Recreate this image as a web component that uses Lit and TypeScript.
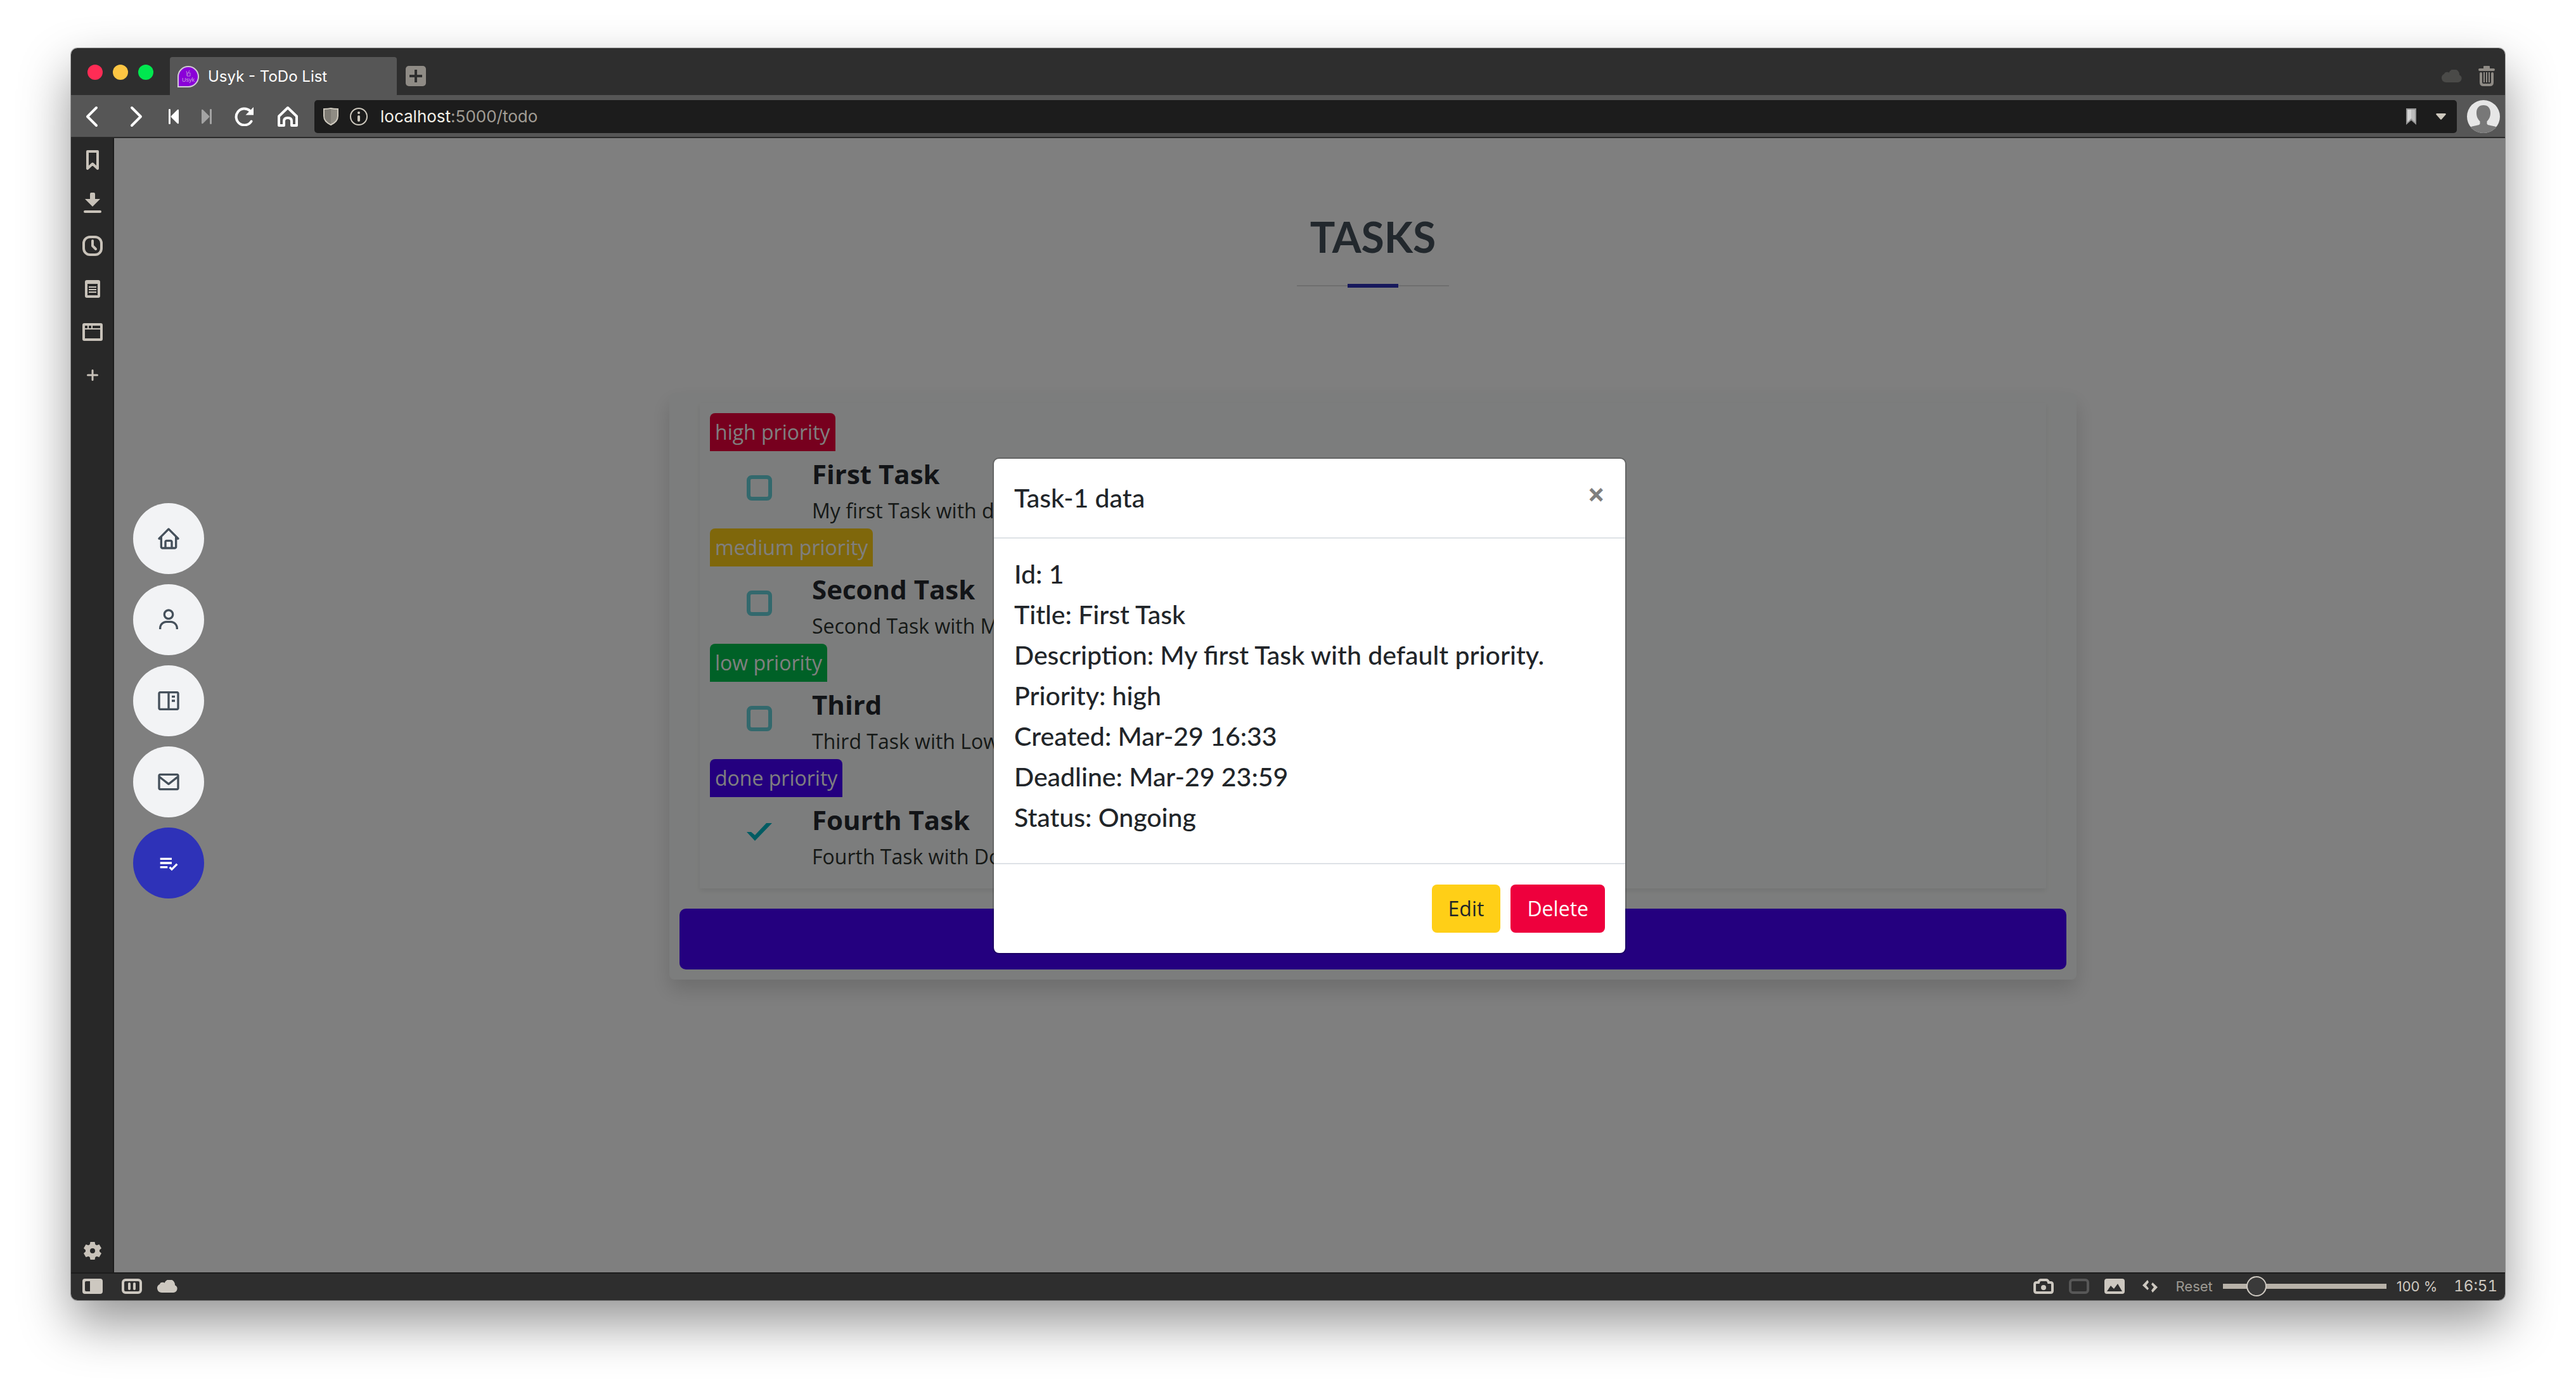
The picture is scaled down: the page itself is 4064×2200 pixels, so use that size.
import { LitElement, html, css, svg, type TemplateResult } from "lit";
import { customElement, property } from "lit/decorators.js";
import { classMap } from "lit/directives/class-map.js";

interface Task {
  id: number;
  priority: "high" | "medium" | "low" | "done";
  title: string;
  description: string;
  done: boolean;
}

const TASKS: Task[] = [
  { id: 1, priority: "high", title: "First Task", description: "My first Task with default priority.", done: false },
  { id: 2, priority: "medium", title: "Second Task", description: "Second Task with Medium priority.", done: false },
  { id: 3, priority: "low", title: "Third", description: "Third Task with Low priority.", done: false },
  { id: 4, priority: "done", title: "Fourth Task", description: "Fourth Task with Done priority.", done: true },
];

const DETAILS: [string, string][] = [
  ["Id", "1"],
  ["Title", "First Task"],
  ["Description", "My first Task with default priority."],
  ["Priority", "high"],
  ["Created", "Mar-29 16:33"],
  ["Deadline", "Mar-29 23:59"],
  ["Status", "Ongoing"],
];

const icon = (w: number, h: number, body: TemplateResult, scale = 1) => html`<svg
  width=${w * scale} height=${h * scale} viewBox="0 0 ${w} ${h}" fill="currentColor" aria-hidden="true">${body}</svg>`;

const stroke = (d: string, width: number) =>
  svg`<path d=${d} fill="none" stroke="currentColor" stroke-width=${width} stroke-linecap="round" stroke-linejoin="round"/>`;

const cloud = icon(32, 20, svg`<path d="M7 20a7 7 0 0 1-3-13.300Q5 3.500 9 3.800Q10.500 4 11.500 4.800A8.500 8.500 0 0 1 28 8.200A6.200 6.200 0 0 1 25.500 20Z"/>`);

const icons = {
  favicon: html`<svg width="34" height="34" viewBox="0 0 34 34" aria-hidden="true">
    <path d="M1 33V17A16 16 0 0 1 33 17A16 16 0 0 1 17 33Z" fill="#8a00d8" stroke="#d2cbd6" stroke-width="2"/>
    <path d="M15 15v-3l-1-4M17 11l2-4M16 11h4v5h-5z" fill="none" stroke="#b98ad6" stroke-width="1"/>
    <text x="17" y="25" font-size="9" text-anchor="middle" fill="#c7a4dc" font-family="Liberation Sans, sans-serif">Usyk</text>
  </svg>`,
  newTab: html`<svg width="32" height="32" viewBox="0 0 32 32" aria-hidden="true">
    <rect width="32" height="32" rx="5" fill="#8f8b85"/><path d="M16 6v20M6 16h20" stroke="#2e2e2e" stroke-width="4"/></svg>`,
  cloud,
  trash: icon(26, 32, svg`<path d="M8 4V1q0-1 1-1h8q1 0 1 1v3h6q2 0 2 2t-2 2H2Q0 8 0 6t2-2z"/>
    <path d="M4 12v14q0 4 4 4h10q4 0 4-4V12" fill="none" stroke="currentColor" stroke-width="4" stroke-linecap="round"/>
    <path d="M9 10v16M13 10v16M17 10v16" stroke="currentColor" stroke-width="2"/>`),
  back: icon(20, 34, stroke("M17 3L3 17L17 31", 4)),
  forward: icon(20, 34, stroke("M3 3L17 17L3 31", 4)),
  rewind: icon(16, 24, svg`<path d="M0 1q0-1 1.500-1T3 1v22q0 1-1.500 1T0 23zM16 2v20q0 2-2 1L4 13q-1-1 0-2L14 1q2-1 2 1z"/>`),
  fastForward: icon(16, 24, svg`<path d="M16 1q0-1-1.500-1T13 1v22q0 1 1.500 1t1.500-1zM0 2v20q0 2 2 1l10-10q1-1 0-2L2 1Q0 0 0 2z"/>`),
  reload: icon(30, 30, svg`<path d="M26.500 22.500A13 13 0 1 1 24 5.500" fill="none" stroke="currentColor" stroke-width="4" stroke-linecap="round"/><path d="M30 0v12.500H17.500z"/>`),
  home: icon(32, 34, stroke("M2 16.500L16 3L30 16.500V31H22V24Q22 19 16 19Q10 19 10 24V31H2Z", 4)),
  shield: html`<svg width="24" height="28" viewBox="0 0 24 28" aria-hidden="true">
    <path d="M1 2Q8 2 12 1Q16 2 23 2V13Q23 22 12 27Q1 22 1 13Z" fill="#8f8c84" stroke="#cdc8bd" stroke-width="2"/>
    <path d="M2 3Q8 3 12 2V26Q2 21 2 13Z" fill="#7d7a73"/></svg>`,
  info: icon(28, 28, svg`<circle cx="14" cy="14" r="13" fill="none" stroke="currentColor" stroke-width="2"/><circle cx="14" cy="8" r="2"/><rect x="12" y="12" width="4" height="10" rx="2"/>`),
  savedPage: html`<svg width="16" height="26" viewBox="0 0 16 26" aria-hidden="true">
    <path d="M0 0H16V26L8 19L0 26Z" fill="#949494"/><path d="M2 2H8V16L2 22Z" fill="#d4d4d4"/><path d="M8 2H14V22L8 16Z" fill="#bdbdbd"/></svg>`,
  caret: icon(16, 10, svg`<path d="M1 0H15Q16.500 1 15 2.500L9 9.300Q8 10.300 7 9.300L1 2.500Q-.5 1 1 0Z"/>`),
  avatar: html`<svg width="52" height="52" viewBox="0 0 52 52" aria-hidden="true">
    <clipPath id="face"><circle cx="26" cy="26" r="26"/></clipPath><g clip-path="url(#face)"><rect width="52" height="52" fill="#e6e6e6"/>
    <path d="M26 8c7 0 11 4.500 11 12c0 6-2 10-5.500 13.500v3.500c0 2 3 2.500 8 3.500c5 1 8 2 12.500 5.500v6H0v-6c4.500-3.500 7.500-4.500 12.500-5.500c5-1 8-1.500 8-3.500v-3.500C17 30 15 26 15 20c0-7.500 4-12 11-12z" fill="#787878"/></g></svg>`,
  bookmark: icon(20, 31, stroke("M2 2H18V29L10 21.500L2 29Z", 4)),
  download: icon(28, 32, svg`<path d="M10 2q0-2 2-2h4q2 0 2 2v8h8L14 22L2 10h8z"/><rect y="28" width="28" height="4" rx="2"/>`),
  clock: icon(32, 32, svg`<rect x="2" y="2" width="28" height="28" rx="10" fill="none" stroke="currentColor" stroke-width="4"/>${stroke("M16 8V16L21 21", 4)}`),
  notes: icon(24, 28, svg`<path fill-rule="evenodd" d="M3 0H21Q24 0 24 3V25Q24 28 21 28H3Q0 28 0 25V3Q0 0 3 0ZM4 6V24H20V6Z"/><path d="M6 10h12v2H6zM6 14h12v2H6zM6 18h12v2H6z"/>`),
  windowPanel: icon(32, 28, svg`<path fill-rule="evenodd" d="M3 0H29Q32 0 32 3V25Q32 28 29 28H3Q0 28 0 25V3Q0 0 3 0ZM4 4V8H8V4ZM10 4V8H14V4ZM16 4V8H28V4ZM4 10V24H28V10Z"/>`),
  plus: icon(18, 18, stroke("M9 1.500V16.500M1.500 9H16.500", 3)),
  gear: icon(28, 28, svg`<path fill-rule="evenodd" d="M10.500 0H17.500L18.300 4L20.500 5.300L24.500 4L28 10L25 12.800V15.200L28 18L24.500 24L20.500 22.700L18.300 24L17.500 28H10.500L9.700 24L7.500 22.700L3.500 24L0 18L3 15.200V12.800L0 10L3.500 4L7.500 5.300L9.700 4ZM14 10A4 4 0 1 0 14 18A4 4 0 1 0 14 10Z"/>`),
  panel: icon(32, 24, svg`<path fill-rule="evenodd" d="M4 0H28Q32 0 32 4V20Q32 24 28 24H4Q0 24 0 20V4Q0 0 4 0ZM6 4Q4 4 4 6V18Q4 20 6 20H12V4Z"/>`),
  pause: icon(32, 24, svg`<rect x="2" y="2" width="28" height="20" rx="4" fill="none" stroke="currentColor" stroke-width="4"/><rect x="10" y="6" width="4" height="12" rx="2"/><rect x="18" y="6" width="4" height="12" rx="2"/>`),
  camera: icon(32, 24, svg`<path d="M5 6H8Q9 2 12 2H20Q23 2 24 6H27Q30 6 30 9V19Q30 22 27 22H5Q2 22 2 19V9Q2 6 5 6Z" fill="none" stroke="currentColor" stroke-width="4"/><circle cx="16" cy="14" r="4"/>`),
  frame: icon(32, 24, svg`<rect x="2" y="2" width="28" height="20" rx="4" fill="none" stroke="currentColor" stroke-width="4"/>`),
  image: icon(32, 24, svg`<path fill-rule="evenodd" d="M4 0H28Q32 0 32 4V20Q32 24 28 24H4Q0 24 0 20V4Q0 0 4 0ZM4 20H28L21 8L15 16L10 11Z"/>`),
  code: icon(24, 20, svg`<path d="M8 0L10 3.500L6 8.500L10 13.500L8 16L0 8.500ZM16 4L14 7L18 11.500L14 16.500L16 20L24 11.500Z"/>`),
  navHome: icon(24, 24, svg`<path fill-rule="evenodd" d="M3 13h1v7c0 1.103.897 2 2 2h12c1.103 0 2-.897 2-2v-7h1a1 1 0 0 0 .707-1.707l-9-9a1 1 0 0 0-1.414 0l-9 9A1 1 0 0 0 3 13zm7 7v-5h4v5h-4zm2-15.586 6 6V20h-2v-5c0-1.103-.897-2-2-2h-4c-1.103 0-2 .897-2 2v5H6v-9.586l6-6z"/>`, 40 / 24),
  navUser: icon(24, 24, svg`<path d="M12 2C9.243 2 7 4.243 7 7s2.243 5 5 5 5-2.243 5-5-2.243-5-5-5zm0 8c-1.654 0-3-1.346-3-3s1.346-3 3-3 3 1.346 3 3-1.346 3-3 3zm9 11v-1c0-3.859-3.141-7-7-7h-4c-3.860 0-7 3.141-7 7v1h2v-1c0-2.757 2.243-5 5-5h4c2.757 0 5 2.243 5 5v1h2z"/>`, 40 / 24),
  navBook: icon(24, 24, svg`<path fill-rule="evenodd" d="M20 3H4c-1.103 0-2 .897-2 2v14c0 1.103.897 2 2 2h16c1.103 0 2-.897 2-2V5c0-1.103-.897-2-2-2zM4 5h7v14H4V5zm9 14V5h7v14h-7z"/><path d="M15 7h3v2h-3zM15 11h3v2h-3z"/>`, 40 / 24),
  navMail: icon(24, 24, svg`<path fill-rule="evenodd" d="M20 4H4c-1.103 0-2 .897-2 2v12c0 1.103.897 2 2 2h16c1.103 0 2-.897 2-2V6c0-1.103-.897-2-2-2zm0 2v.511l-8 6.223-8-6.222V6h16zM4 18V9.044l7.386 5.745a.994.994 0 0 0 1.228 0L20 9.044 20.002 18H4z"/>`, 40 / 24),
  navList: icon(24, 24, svg`<path d="M4 7h11v2H4zm0 4h11v2H4zm0 4h7v2H4zm15.299-2.708-4.300 4.291-1.292-1.291-1.414 1.415 2.706 2.704 5.712-5.703z"/>`, 40 / 24),
};

const base = css`
  * { box-sizing: border-box; }
  button { margin: 0; padding: 0; border: 0; background: none; color: inherit; font: inherit; cursor: pointer; }
  svg { display: block; }
`;

@customElement("browser-chrome")
export class BrowserChrome extends LitElement {
  static styles = [base, css`
    :host { display: block; font-family: Inter, "Liberation Sans", sans-serif; color: #fff; }
    .tabs { display: flex; height: 74px; padding-right: 16px; background: #2e2e2e; align-items: flex-end; }
    .lights { display: flex; gap: 16px; align-self: stretch; align-items: center; padding: 2px 26px 0; }
    .light { width: 24px; height: 24px; border-radius: 50%; }
    .close { background: #ff2c55; }
    .minimise { background: #fdc643; }
    .zoom { background: #00e84f; }
    .tab { display: flex; align-items: center; gap: 14px; width: 358px; height: 60px; padding: 2px 12px 0; background: #565656; border-radius: 4px 4px 0 0; font-size: 24px; line-height: 32px; }
    .new { display: flex; align-items: center; height: 60px; padding: 0 14px; }
    .right { display: flex; align-items: center; gap: 26px; height: 60px; margin-left: auto; color: #8f8b85; }
    .dim { color: #4a4a48; }
    .bar { display: grid; grid-template-columns: 66px 74px 44px 60px 58px 80px 1fr auto; align-items: center; height: 68px; padding: 2px 8px 0 0; background: #565656; border-bottom: 2px solid #2a2a2a; }
    .bar button { display: grid; place-items: center; height: 52px; }
    .off { color: #a3a3a3; }
    .address { display: flex; align-items: center; height: 52px; margin: 0 16px 0 2px; padding: 0 17px 0 14px; background: #1c1c1c; border-radius: 5px; font-size: 26px; line-height: 32px; color: #a19d95; }
    .info { margin: 0 20px 0 18px; color: #cdc8bd; }
    .host { color: #f3f0e8; }
    .marks { display: flex; align-items: center; gap: 31px; margin-left: auto; color: #cdc8bd; }
  `];

  render() {
    return html`
      <div class="tabs">
        <div class="lights">
          <button class="light close" aria-label="Close"></button>
          <button class="light minimise" aria-label="Minimise"></button>
          <button class="light zoom" aria-label="Zoom"></button>
        </div>
        <button class="tab">${icons.favicon}<span>Usyk - ToDo List</span></button>
        <button class="new" aria-label="New tab">${icons.newTab}</button>
        <div class="right">
          <button class="dim" aria-label="Synced tabs">${icons.cloud}</button>
          <button aria-label="Closed tabs">${icons.trash}</button>
        </div>
      </div>
      <div class="bar">
        <button aria-label="Back">${icons.back}</button>
        <button aria-label="Forward">${icons.forward}</button>
        <button aria-label="Rewind">${icons.rewind}</button>
        <button class="off" aria-label="Fast forward">${icons.fastForward}</button>
        <button aria-label="Reload">${icons.reload}</button>
        <button aria-label="Home page">${icons.home}</button>
        <div class="address">
          ${icons.shield}
          <span class="info">${icons.info}</span>
          <span><span class="host">localhost</span>:5000/todo</span>
          <div class="marks">
            <button aria-label="Bookmark page">${icons.savedPage}</button>
            <button aria-label="Address history">${icons.caret}</button>
          </div>
        </div>
        <button aria-label="Profile">${icons.avatar}</button>
      </div>
    `;
  }
}

@customElement("side-panel")
export class SidePanel extends LitElement {
  static styles = [base, css`
    :host { display: flex; flex-direction: column; width: 68px; background: #282828; border-right: 2px solid #1c1c1c; color: #c8c2b9; }
    button { display: grid; place-items: center; height: 68px; padding-left: 2px; }
    .settings { margin-top: auto; }
  `];

  render() {
    return html`
      <button aria-label="Bookmarks">${icons.bookmark}</button>
      <button aria-label="Downloads">${icons.download}</button>
      <button aria-label="History">${icons.clock}</button>
      <button aria-label="Notes">${icons.notes}</button>
      <button aria-label="Window">${icons.windowPanel}</button>
      <button aria-label="Add web panel">${icons.plus}</button>
      <button class="settings" aria-label="Settings">${icons.gear}</button>
    `;
  }
}

@customElement("status-bar")
export class StatusBar extends LitElement {
  static styles = [base, css`
    :host { display: flex; align-items: center; height: 44px; padding: 0 12px 2px 18px; background: #2e2e2e; border-top: 2px solid #1c1c1c; color: #cdc8c0; font: 24px/32px Inter, "Liberation Sans", sans-serif; }
    .left { display: flex; align-items: center; gap: 30px; }
    .left button:last-child { margin-left: -6px; }
    .right { display: flex; align-items: center; gap: 24px; margin-left: auto; }
    .dim { color: #575757; }
    .code { margin: 0 4px; }
    .reset { color: #9c9992; font-size: 22px; }
    .level { display: flex; align-items: center; gap: 16px; font-size: 22px; }
    .clock { margin-left: 2px; font-variant-numeric: tabular-nums; }
    input { appearance: none; width: 258px; height: 32px; margin: 0 0 0 -8px; background: linear-gradient(#b8b2a9, #b8b2a9) center / 100% 8px no-repeat; border-radius: 4px; }
    input::-webkit-slider-thumb { appearance: none; width: 32px; height: 32px; border: 2px solid #cdc8c0; border-radius: 50%; background: #3a3a3a; }
  `];

  render() {
    return html`
      <div class="left">
        <button aria-label="Toggle panel">${icons.panel}</button>
        <button aria-label="Break mode">${icons.pause}</button>
        <button aria-label="Sync">${icons.cloud}</button>
      </div>
      <div class="right">
        <button aria-label="Capture page">${icons.camera}</button>
        <button class="dim" aria-label="Page tiling">${icons.frame}</button>
        <button aria-label="Toggle images">${icons.image}</button>
        <button class="code" aria-label="Page actions">${icons.code}</button>
        <button class="reset">Reset</button>
        <label class="level">
          <input type="range" min="20" max="500" value="100" aria-label="Page zoom" />
          <span>100 %</span>
        </label>
        <span class="clock">16:51</span>
      </div>
    `;
  }
}

@customElement("task-item")
export class TaskItem extends LitElement {
  @property({ attribute: false }) task!: Task;

  static styles = [base, css`
    :host { display: block; }
    .badge { display: inline-block; padding: 6px 8px; border-radius: 8px 8px 0 0; color: #fff; line-height: 48px; vertical-align: top; }
    .high { background: #ee003d; }
    .medium { background: #ffcf17; }
    .low { background: #00c34f; }
    .done { background: #4800fe; }
    .body { display: flex; align-items: flex-start; gap: 63px; padding: 12px 0 4px 58px; }
    .title { display: block; font-size: 42px; line-height: 48px; font-weight: 700; color: #25282e; }
    .text { margin: 10px 0 0; line-height: 48px; color: #2c322f; }
    input { appearance: none; width: 40px; height: 40px; margin: 26px 0 0; border: 6px solid #66d2da; border-radius: 8px; }
    input:checked { border: 0; background: #00b8c6; border-radius: 0; clip-path: polygon(0 17px, 7px 17px, 13px 22px, 31px 3px, 40px 3px, 13px 31px); }
  `];

  render() {
    const { id, priority, title, description, done } = this.task;
    return html`
      <span class=${classMap({ badge: true, [priority]: true })}>${priority} priority</span>
      <div class="body">
        <input type="checkbox" id="task-${id}" .checked=${done} />
        <div>
          <label class="title" for="task-${id}">${title}</label>
          <p class="text">${description}</p>
        </div>
      </div>
    `;
  }
}

@customElement("task-dialog")
export class TaskDialog extends LitElement {
  static styles = [base, css`
    :host { display: block; width: 1000px; max-width: 100%; background: #fff; background-clip: padding-box; border: 2px solid rgba(0, 0, 0, 0.2); border-radius: 10px; color: #212529; }
    .head { display: flex; justify-content: space-between; align-items: flex-start; padding: 32px; border-bottom: 2px solid #dee2e6; }
    h5, p { margin: 0; font-family: Lato, "Open Sans", sans-serif; font-weight: 500; font-size: 41px; }
    h5 { line-height: 60px; }
    .close { font-size: 48px; line-height: 48px; font-weight: 700; color: #7f7f7f; }
    .body { padding: 32px; }
    p { line-height: 48px; margin-bottom: 16px; }
    .foot { display: flex; justify-content: flex-end; gap: 16px; padding: 32px; border-top: 2px solid #dee2e6; }
    .foot button { padding: 14px 26px; border-radius: 8px; line-height: 48px; }
    .edit { background: #ffcf17; }
    .delete { background: #ee003d; color: #fff; }
  `];

  render() {
    return html`
      <div class="head">
        <h5>Task-1 data</h5>
        <button class="close" aria-label="Close">×</button>
      </div>
      <div class="body">${DETAILS.map(([name, value]) => html`<p>${name}: ${value}</p>`)}</div>
      <div class="foot">
        <button class="edit">Edit</button>
        <button class="delete">Delete</button>
      </div>
    `;
  }
}

@customElement("todo-page")
export class TodoPage extends LitElement {
  static styles = [base, css`
    :host { display: grid; background: #fff; font: 32px/48px "Open Sans", sans-serif; }
    main, .backdrop, nav { grid-area: 1 / 1; }
    main { display: flex; flex-direction: column; align-items: center; padding: 118px 0 0 200px; }
    h2 { margin: 0; font: 700 66px/76px Lato, "Open Sans", sans-serif; color: #45505b; }
    .rule { width: 240px; height: 6px; margin: 36px 0 166px; background: linear-gradient(#2e32b8, #2e32b8) center / 80px 6px no-repeat, linear-gradient(#ddd, #ddd) center / 100% 2px no-repeat; }
    .card { width: 2220px; max-width: 100%; padding: 16px; background: #f9fbfa; border-radius: 8px; box-shadow: 0 16px 32px rgba(0, 0, 0, 0.15); }
    .list { margin: 0 32px 32px; padding: 16px 16px 22px; box-shadow: 0 4px 8px rgba(0, 0, 0, 0.075); }
    .add { display: block; width: 100%; height: 96px; border-radius: 10px; background: #4800fe; }
    .backdrop { display: grid; place-items: center; padding-top: 2px; background: rgba(0, 0, 0, 0.5); z-index: 1; }
    nav { display: grid; gap: 16px; align-self: center; justify-self: start; margin: 0 0 14px 30px; z-index: 2; }
    nav a { display: grid; place-items: center; width: 112px; height: 112px; border-radius: 50%; background: #f2f3f5; color: #45505b; }
    nav a.active { background: #2e32b8; color: #fff; }
  `];

  render() {
    return html`
      <main>
        <h2>TASKS</h2>
        <div class="rule"></div>
        <section class="card">
          <div class="list">${TASKS.map((task) => html`<task-item .task=${task}></task-item>`)}</div>
          <button class="add" aria-label="Add task"></button>
        </section>
      </main>
      <div class="backdrop"><task-dialog role="dialog" aria-label="Task-1 data"></task-dialog></div>
      <nav>
        <a href="#home" aria-label="Home">${icons.navHome}</a>
        <a href="#profile" aria-label="Profile">${icons.navUser}</a>
        <a href="#content" aria-label="Content">${icons.navBook}</a>
        <a href="#contact" aria-label="Contact">${icons.navMail}</a>
        <a class="active" href="#todo" aria-label="Tasks">${icons.navList}</a>
      </nav>
    `;
  }
}

@customElement("app-root")
export class AppRoot extends LitElement {
  static styles = [base, css`
    :host { display: flex; min-height: 100vh; padding: 76px 112px 148px; background: #fff; box-sizing: border-box; overflow: hidden; }
    .window { flex: 1; display: grid; grid-template: auto 1fr auto / auto 1fr; border-radius: 10px; overflow: hidden; box-shadow: 0 0 0 1px rgba(0, 0, 0, 0.3), 0 36px 80px rgba(0, 0, 0, 0.42); }
    browser-chrome, status-bar { grid-column: 1 / -1; }
  `];

  render() {
    return html`
      <div class="window">
        <browser-chrome></browser-chrome>
        <side-panel></side-panel>
        <todo-page></todo-page>
        <status-bar></status-bar>
      </div>
    `;
  }
}
